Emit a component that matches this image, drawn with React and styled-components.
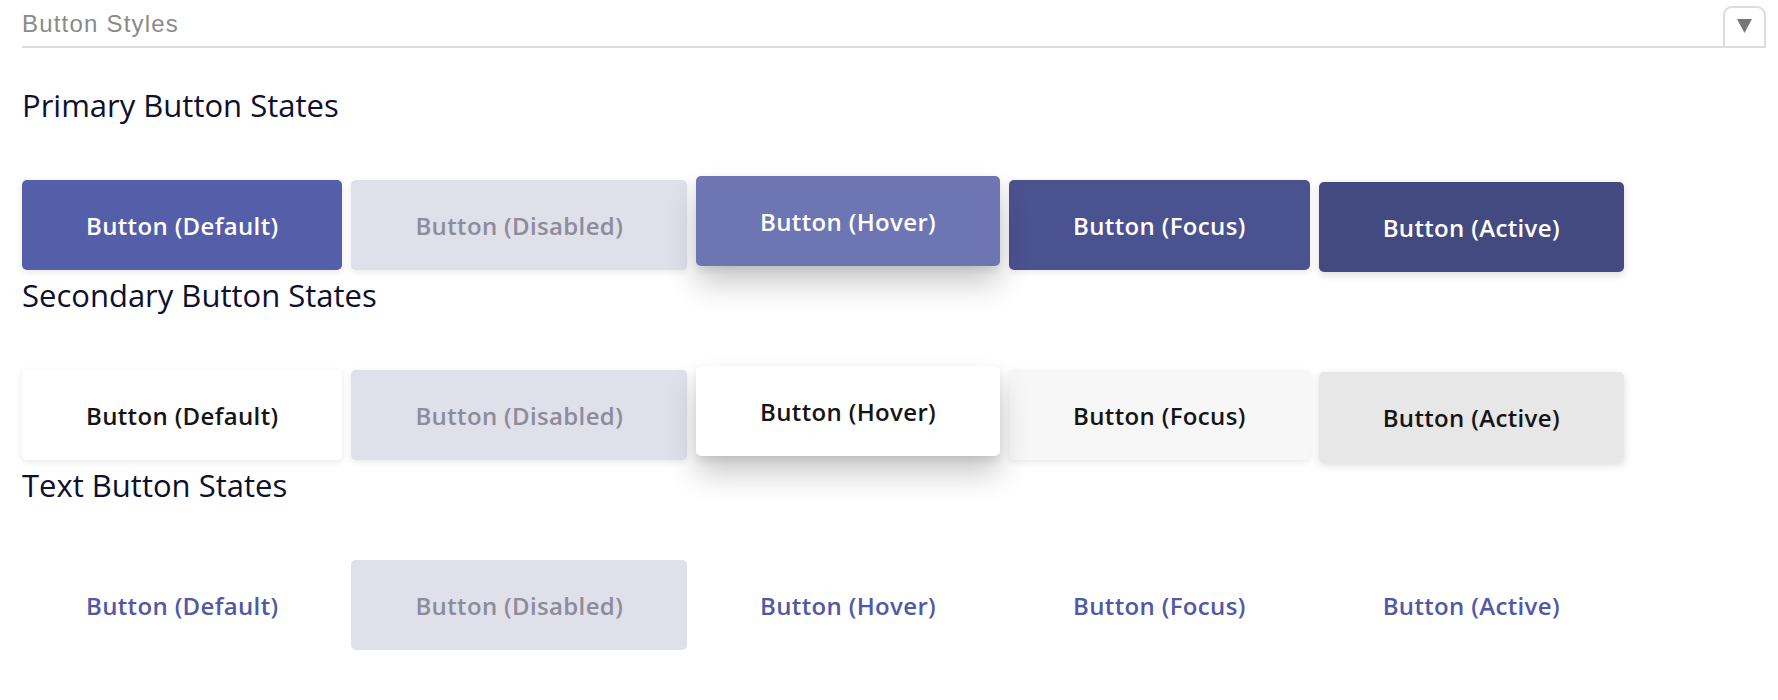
import React from "react";
import styled, { createGlobalStyle, css } from "styled-components";

const GlobalStyle = createGlobalStyle`
  html, body {
    margin: 0;
    padding: 0;
    background: #ffffff;
  }
  body {
    font-family: "Open Sans", "Noto Sans", sans-serif;
    -webkit-font-smoothing: antialiased;
  }
`;

const Page = styled.div`
  padding: 0 12px 0 22px;
`;

const Header = styled.div`
  display: flex;
  justify-content: space-between;
  align-items: flex-start;
  padding-top: 6px;
  border-bottom: 2px solid #dddddd;
`;

const HeaderTitle = styled.div`
  font-family: "Liberation Sans", Arial, sans-serif;
  font-size: 24px;
  letter-spacing: 1.2px;
  line-height: 36px;
  color: #8a8a8a;
`;

const Toggle = styled.div`
  box-sizing: border-box;
  width: 43px;
  height: 40px;
  border: 2px solid #dddddd;
  border-bottom: none;
  border-radius: 9px 9px 0 0;
  display: flex;
  justify-content: center;
  padding-top: 11px;
`;

const Section = styled.section`
  padding-top: 4px;
  &:first-of-type {
    padding-top: 36px;
  }
`;

const SectionTitle = styled.h2`
  margin: 0;
  font-family: "Open Sans", sans-serif;
  font-weight: 400;
  font-size: 31px;
  line-height: 42px;
  color: #0d102e;
`;

const Row = styled.div`
  display: flex;
  gap: 9px;
  margin-top: 54px;
`;

const primary = {
  default: css`background: #555ea8; color: #fff;`,
  hover: css`background: #6d75b3; color: #fff;`,
  focus: css`background: #4b5290; color: #fff;`,
  active: css`background: #434a80; color: #fff;`,
};

const secondary = {
  default: css`background: #ffffff; color: #151515;`,
  hover: css`background: #ffffff; color: #151515;`,
  focus: css`background: #f7f7f7; color: #151515;`,
  active: css`background: #e7e7e7; color: #151515;`,
};

const textVariant = {
  default: css`background: transparent; color: #5159a6;`,
  hover: css`background: transparent; color: #5159a6;`,
  focus: css`background: transparent; color: #5159a6;`,
  active: css`background: transparent; color: #5159a6;`,
};

const palettes = { primary, secondary, text: textVariant };

const Button = styled.button`
  box-sizing: border-box;
  height: 90px;
  padding: 0 64px;
  border: none;
  border-radius: 5px;
  font-family: "Open Sans", sans-serif;
  font-weight: 600;
  font-size: 24px;
  letter-spacing: 0.35px;
  display: flex;
  align-items: center;
  justify-content: center;
  white-space: nowrap;
  cursor: pointer;
  box-shadow: ${({ $variant }) =>
    $variant === "text" ? "none" : "0 2px 7px rgba(30, 30, 60, 0.1)"};

  ${({ $variant, $state }) =>
    $state === "disabled"
      ? css`
          background: #dfe0ea;
          color: #8c8c9c;
          cursor: default;
        `
      : palettes[$variant][$state]}

  ${({ $variant, $state }) =>
    $variant !== "text" &&
    $state === "hover" &&
    css`
      transform: translateY(-4px);
      box-shadow: 0 18px 30px rgba(0, 0, 0, 0.2), 0 4px 8px rgba(0, 0, 0, 0.1);
    `}

  ${({ $variant, $state }) =>
    $variant !== "text" &&
    $state === "active" &&
    css`
      transform: translateY(2px);
      box-shadow: 0 3px 8px rgba(0, 0, 0, 0.14);
    `}

  ${({ $variant, $state }) =>
    $variant === "text" &&
    $state === "disabled" &&
    css`
      box-shadow: none;
    `}
`;

const Caret = styled.svg`
  width: 15px;
  height: 14px;
  display: block;
`;

const states = [
  { key: "default", label: "Button (Default)" },
  { key: "disabled", label: "Button (Disabled)" },
  { key: "hover", label: "Button (Hover)" },
  { key: "focus", label: "Button (Focus)" },
  { key: "active", label: "Button (Active)" },
];

const groups = [
  { variant: "primary", title: "Primary Button States" },
  { variant: "secondary", title: "Secondary Button States" },
  { variant: "text", title: "Text Button States" },
];

export default function App() {
  return (
    <>
      <GlobalStyle />
      <Page>
        <Header>
          <HeaderTitle>Button Styles</HeaderTitle>
          <Toggle>
            <Caret viewBox="0 0 15 14">
              <polygon points="0,0 15,0 7.5,14" fill="#777777" />
            </Caret>
          </Toggle>
        </Header>
        {groups.map((g) => (
          <Section key={g.variant}>
            <SectionTitle>{g.title}</SectionTitle>
            <Row>
              {states.map((s) => (
                <Button
                  key={s.key}
                  $variant={g.variant}
                  $state={s.key}
                  disabled={s.key === "disabled"}
                >
                  {s.label}
                </Button>
              ))}
            </Row>
          </Section>
        ))}
      </Page>
    </>
  );
}
